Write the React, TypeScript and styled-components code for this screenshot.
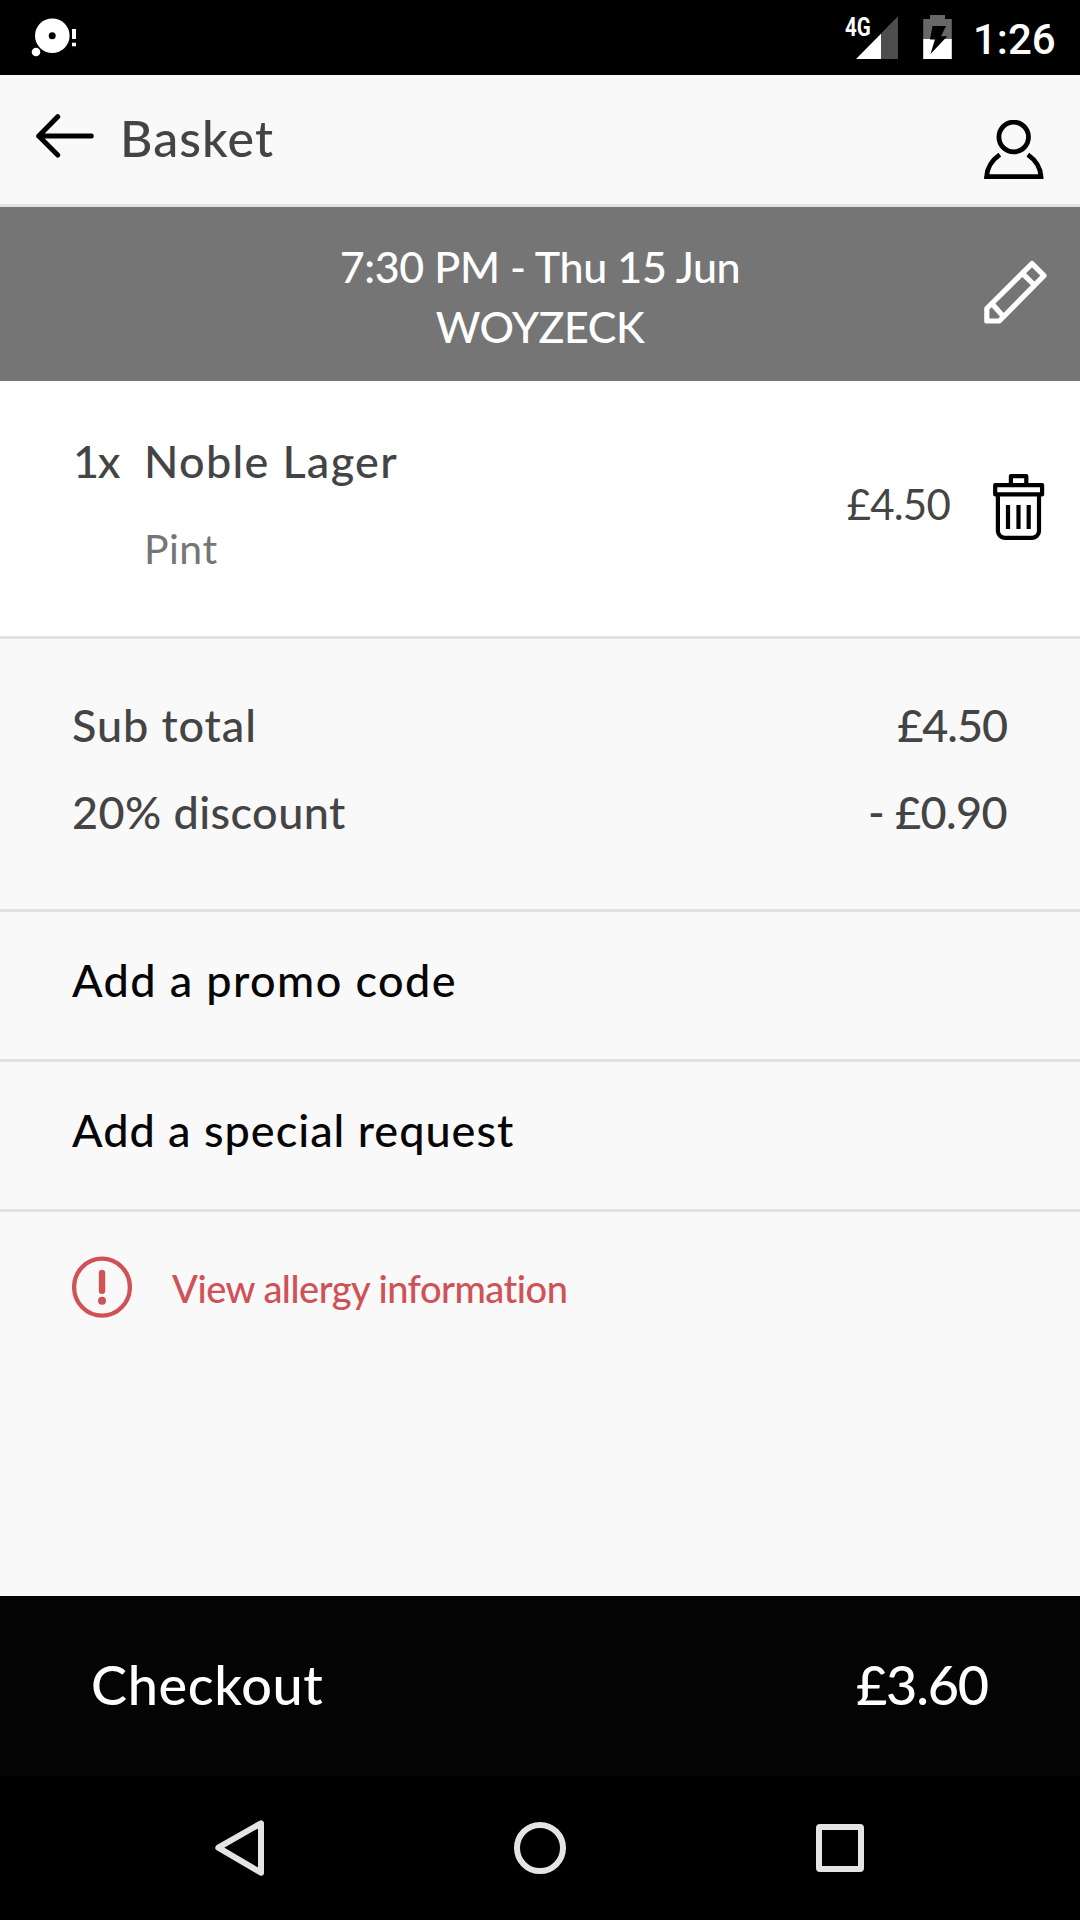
import React from 'react';
import styled, { createGlobalStyle } from 'styled-components';

const GlobalStyle = createGlobalStyle`
  *, *::before, *::after { box-sizing: border-box; }
  body { margin: 0; background: #f9f9f9; }
  svg { display: block; flex: none; }
`;

const Screen = styled.div`
  width: 1080px;
  height: 1920px;
  display: flex;
  flex-direction: column;
  background: #f9f9f9;
  font-family: Lato, 'Open Sans', sans-serif;
  overflow: hidden;
`;

const Text = styled.span<{ $size: number; $spacing?: number; $color?: string; $weight?: number }>`
  display: block;
  font-size: ${p => p.$size}px;
  font-weight: ${p => p.$weight ?? 500};
  line-height: 1.2;
  letter-spacing: ${p => p.$spacing ?? 0}px;
  color: ${p => p.$color ?? '#444444'};
  white-space: nowrap;
`;

const StatusBar = styled.div`
  height: 75px;
  flex: none;
  display: flex;
  justify-content: space-between;
  align-items: flex-start;
  padding: 15px 25px 0 31px;
  background: #000;
  color: #fff;
  font-family: Roboto, sans-serif;
  font-weight: 500;
`;

const StatusGroup = styled.div`
  display: flex;
  align-items: flex-start;
`;

const NetworkLabel = styled.span`
  width: 25px;
  margin-right: -14px;
  font-size: 26px;
  font-weight: 700;
  line-height: 24px;
  white-space: nowrap;
  transform: scaleX(0.79);
  transform-origin: left;
  z-index: 1;
`;

const BatterySlot = styled.div`
  margin: 0 21px 0 25px;
`;

const Clock = styled.span`
  width: 82px;
  font-size: 42px;
  line-height: 50px;
`;

const Header = styled.header`
  height: 132px;
  flex: none;
  display: flex;
  align-items: flex-start;
  padding: 0 36px;
  border-bottom: 3px solid #e2e2e2;
`;

const IconButton = styled.button<{ $top?: number }>`
  display: block;
  margin: ${p => p.$top ?? 0}px 0 0;
  padding: 0;
  border: 0;
  background: none;
`;

const Title = styled.h1`
  flex: 1;
  margin: 33px 0 0 26px;
  font-weight: 400;
`;

const Banner = styled.section`
  height: 174px;
  flex: none;
  display: grid;
  grid-template-columns: 1fr auto 1fr;
  align-items: start;
  padding: 0 32px;
  background: #757575;
`;

const BannerText = styled.div`
  grid-column: 2;
  padding-top: 30px;
  text-align: center;

  ${Text} { line-height: 60px; }
`;

const BannerAction = styled.div`
  justify-self: end;
`;

const Item = styled.section`
  height: 258px;
  flex: none;
  display: flex;
  align-items: flex-start;
  padding: 0 35px 0 73px;
  background: #fff;
  border-bottom: 3px solid #e2e2e2;
`;

const Quantity = styled.div`
  width: 71px;
  padding-top: 53px;
`;

const Details = styled.div`
  flex: 1;
  display: flex;
  flex-direction: column;
  gap: 36px;
  padding-top: 53px;
`;

const Price = styled.div`
  margin: 98px 43px 0 0;
`;

const Totals = styled.section`
  height: 273px;
  flex: none;
  display: flex;
  flex-direction: column;
  gap: 33px;
  padding: 59px 73px 0 72px;
  border-bottom: 3px solid #e2e2e2;
`;

const TotalLine = styled.div`
  display: flex;
  justify-content: space-between;
`;

const ActionRow = styled.div`
  height: 150px;
  flex: none;
  padding: 41px 72px 0;
  border-bottom: 3px solid #e2e2e2;
`;

const Allergy = styled.section`
  flex: 1;
  display: flex;
  align-items: flex-start;
  gap: 40px;
  padding: 44px 72px 0;

  ${Text} { margin-top: 10px; }
`;

const CheckoutBar = styled.div`
  height: 180px;
  flex: none;
  display: flex;
  justify-content: space-between;
  padding: 57px 92px 0 91px;
  background: #040404;
`;

const NavBar = styled.nav`
  height: 144px;
  flex: none;
  display: grid;
  grid-template-columns: repeat(3, 1fr);
  place-items: center;
  padding: 0 90px;
  background: #000;
`;

const NotificationIcon = () => (
  <svg width="46" height="44" viewBox="31 15 46 44" fill="#fff">
    <circle cx="52.3" cy="35.7" r="17.3" />
    <circle cx="52.2" cy="35.8" r="3.5" fill="#000" />
    <circle cx="36" cy="52" r="4.3" />
    <path d="M72 29h4v10h-4zM72 42.7h4v3.6h-4z" />
  </svg>
);

const SignalIcon = () => (
  <svg width="42" height="44" viewBox="856 15 42 44">
    <path d="M881 33.4 898 16.3V59H881z" fill="#4d4d4d" />
    <path d="M856 59 881 33.7V59z" fill="#fff" />
  </svg>
);

const BatteryIcon = () => (
  <svg width="29" height="44" viewBox="923 15 29 44">
    <path d="M930 15h15v4h6.8v20H923.2V19H930z" fill="#676767" />
    <path d="M923.2 39h28.6v20h-28.6z" fill="#fff" />
    <path d="m932.5 26 13.5 0-5 10.2h6.3L930.5 54l4.4-14.4H930z" fill="#000" />
  </svg>
);

const BackArrow = () => (
  <svg width="58" height="44" viewBox="36 113.7 58 44" fill="none" stroke="#000" strokeWidth="5" strokeLinecap="round" strokeLinejoin="round">
    <path d="M91.3 135.7H38.7M57.7 116.4 38.7 135.7l19 19" />
  </svg>
);

const PersonIcon = () => (
  <svg width="60" height="60" viewBox="984 120 60 60" fill="none" stroke="#000" strokeWidth="4.8">
    <circle cx="1013.7" cy="137" r="14.8" />
    <path d="M999.8 154.6c-8 5.6-12.7 14.2-13.2 22h54.4c-.5-7.8-5.2-16.4-13.2-22" />
  </svg>
);

const PencilIcon = () => (
  <svg width="64" height="64" fill="none" stroke="#fff" strokeWidth="5.2" strokeLinejoin="round">
    <path d="M2.8 61V48.5L48 3.6l12 12L15.3 61zM8.3 44l10.4 11.7M38.3 13.3l11.4 11" />
  </svg>
);

const TrashIcon = () => (
  <svg width="52" height="66" fill="none" stroke="#000" strokeWidth="4.2" strokeLinejoin="round">
    <path d="M2.2 11.1h46.9v9.3H2.2zM17.9 11V2.2h15.4V11" />
    <path d="M4.9 20.4V57a6.8 6.8 0 0 0 6.8 6.8H39.2A6.8 6.8 0 0 0 46 57V20.4M15 31v24M25.5 31v24M35.7 31v24" />
  </svg>
);

const WarningIcon = () => (
  <svg width="60" height="62" fill="none" stroke="#cf5257">
    <ellipse cx="30" cy="31.2" rx="27.9" ry="28.5" strokeWidth="4.3" />
    <path d="M30 17v17.8" strokeWidth="6.4" strokeLinecap="round" />
    <circle cx="30" cy="44.8" r="4" fill="#cf5257" stroke="none" />
  </svg>
);

const NavIcon = ({ children }: { children: React.ReactNode }) => (
  <svg width="60" height="60" fill="none" stroke="#e4e4e4" strokeWidth="6" strokeLinejoin="round">
    {children}
  </svg>
);

const totals = [
  { label: 'Sub total', spacing: 0.9, value: '£4.50', valueSpacing: -1.06 },
  { label: '20% discount', spacing: 0.42, value: '- £0.90', valueSpacing: -0.6 },
];

const actions = [
  { label: 'Add a promo code', spacing: 1.4 },
  { label: 'Add a special request', spacing: 1 },
];

export default function App() {
  return (
    <Screen>
      <GlobalStyle />
      <StatusBar>
        <NotificationIcon />
        <StatusGroup>
          <NetworkLabel>4G</NetworkLabel>
          <SignalIcon />
          <BatterySlot><BatteryIcon /></BatterySlot>
          <Clock>1:26</Clock>
        </StatusGroup>
      </StatusBar>

      <Header>
        <IconButton $top={39} aria-label="Back"><BackArrow /></IconButton>
        <Title><Text $size={50} $spacing={1.1}>Basket</Text></Title>
        <IconButton $top={45} aria-label="Account"><PersonIcon /></IconButton>
      </Header>

      <Banner>
        <BannerText>
          <Text $size={43} $spacing={-0.4} $color="#fff">7:30 PM - Thu 15 Jun</Text>
          <Text $size={43} $spacing={-0.45} $color="#fff">WOYZECK</Text>
        </BannerText>
        <BannerAction>
          <IconButton $top={53} aria-label="Edit"><PencilIcon /></IconButton>
        </BannerAction>
      </Banner>

      <Item>
        <Quantity><Text $size={45} $spacing={-1.3}>1x</Text></Quantity>
        <Details>
          <Text $size={45} $spacing={1.3}>Noble Lager</Text>
          <Text $size={41} $spacing={0.5} $weight={400} $color="#757575">Pint</Text>
        </Details>
        <Price><Text $size={42} $spacing={-0.8} $weight={400}>£4.50</Text></Price>
        <IconButton $top={93} aria-label="Remove"><TrashIcon /></IconButton>
      </Item>

      <Totals>
        {totals.map(t => (
          <TotalLine key={t.label}>
            <Text $size={45} $spacing={t.spacing}>{t.label}</Text>
            <Text $size={45} $spacing={t.valueSpacing}>{t.value}</Text>
          </TotalLine>
        ))}
      </Totals>

      {actions.map(a => (
        <ActionRow key={a.label}>
          <Text $size={45} $spacing={a.spacing} $color="#060606">{a.label}</Text>
        </ActionRow>
      ))}

      <Allergy>
        <WarningIcon />
        <Text $size={38} $spacing={-0.5} $color="#cf5257">View allergy information</Text>
      </Allergy>

      <CheckoutBar>
        <Text $size={54} $spacing={0.65} $color="#fff">Checkout</Text>
        <Text $size={54} $spacing={-1.2} $color="#fff">£3.60</Text>
      </CheckoutBar>

      <NavBar>
        <NavIcon><path d="M8.3 29.7 51 5.3v49.4z" /></NavIcon>
        <NavIcon><circle cx="30" cy="30" r="23" /></NavIcon>
        <NavIcon><rect x="9" y="9" width="42" height="42" rx="1" /></NavIcon>
      </NavBar>
    </Screen>
  );
}
